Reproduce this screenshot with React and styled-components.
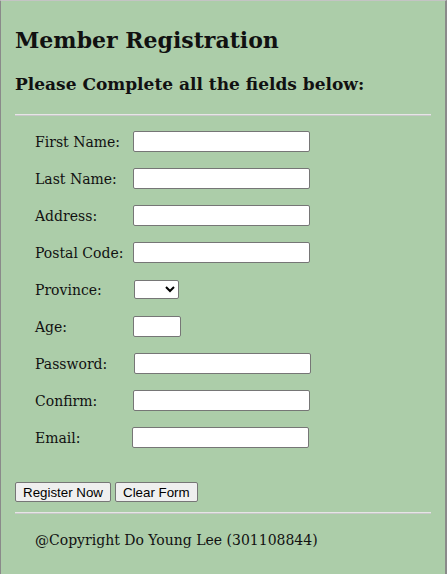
import styled, { createGlobalStyle } from "styled-components";

const GlobalStyle = createGlobalStyle`
  html, body {
    margin: 0;
    padding: 0;
    background: #accda9;
  }
  body {
    font-family: "DejaVu Serif", Georgia, serif;
    color: #111;
  }
`;

const fields = [
  { label: "First Name:", type: "text" },
  { label: "Last Name:", type: "text" },
  { label: "Address:", type: "text" },
  { label: "Postal Code:", type: "text" },
  { label: "Province:", type: "select" },
  { label: "Age:", type: "age" },
  { label: "Password:", type: "password", shift: 1 },
  { label: "Confirm:", type: "password" },
  { label: "Email:", type: "email", shift: -1 },
];

function App() {
  return (
    <>
      <GlobalStyle />
      <Page>
        <Title>Member Registration</Title>
        <Subtitle>Please Complete all the fields below:</Subtitle>
        <Rule />
        <Form onSubmit={(e) => e.preventDefault()}>
          {fields.map((f) => (
            <Row key={f.label}>
              <Label>{f.label}</Label>
              {f.type === "select" ? (
                <Select>
                  <option></option>
                </Select>
              ) : (
                <Input
                  type={f.type === "age" ? "text" : f.type}
                  $small={f.type === "age"}
                  $shift={f.shift || 0}
                />
              )}
            </Row>
          ))}
          <Buttons>
            <Button type="submit">Register Now</Button>
            <Button type="reset">Clear Form</Button>
          </Buttons>
        </Form>
        <Rule $gap={10} />
        <Footer>@Copyright Do Young Lee (301108844)</Footer>
      </Page>
    </>
  );
}

const Page = styled.div`
  box-sizing: border-box;
  min-height: 574px;
  padding: 0 14px 0 14px;
  border-top: 1px solid #c4c4c4;
  border-left: 2px solid #8a8a8a;
  border-right: 2px solid #8a8a8a;
  margin-left: -1px;
`;

const Title = styled.h1`
  font-size: 22px;
  font-weight: bold;
  line-height: 28px;
  margin: 25px 0 0;
`;

const Subtitle = styled.h3`
  font-size: 17px;
  font-weight: bold;
  line-height: 24px;
  margin: 18px 0 0;
`;

const Rule = styled.hr`
  border: none;
  border-top: 1px solid #e6e6e6;
  border-bottom: 1px solid #c8c8c8;
  margin: ${(p) => p.$gap ?? 18}px 0 0;
  height: 0;
`;

const Form = styled.form`
  padding: 7px 0 0 20px;
`;

const Row = styled.div`
  display: grid;
  grid-template-columns: 98px auto;
  align-items: center;
  height: 37px;
`;

const Label = styled.label`
  font-size: 14px;
`;

const Input = styled.input`
  box-sizing: border-box;
  width: ${(p) => (p.$small ? "48px" : "177px")};
  height: 21px;
  margin-left: ${(p) => p.$shift}px;
  border: 1px solid #767676;
  border-radius: 2px;
  background: #fff;
  padding: 1px 2px;
`;

const Select = styled.select`
  box-sizing: border-box;
  width: 45px;
  height: 19px;
  margin-left: 1px;
  border: 1px solid #767676;
  border-radius: 2px;
  background: #fff;
`;

const Buttons = styled.div`
  display: flex;
  gap: 4px;
  margin: 26px 0 0 -20px;
`;

const Button = styled.button`
  box-sizing: border-box;
  height: 20px;
  padding: 1px 7px;
  font-family: "Liberation Sans", Arial, sans-serif;
  font-size: 13.33px;
  color: #000;
  background: #efefef;
  border: 1px solid #767676;
  border-radius: 2px;
`;

const Footer = styled.p`
  font-size: 14px;
  margin: 18px 0 0 20px;
`;

export default App;
